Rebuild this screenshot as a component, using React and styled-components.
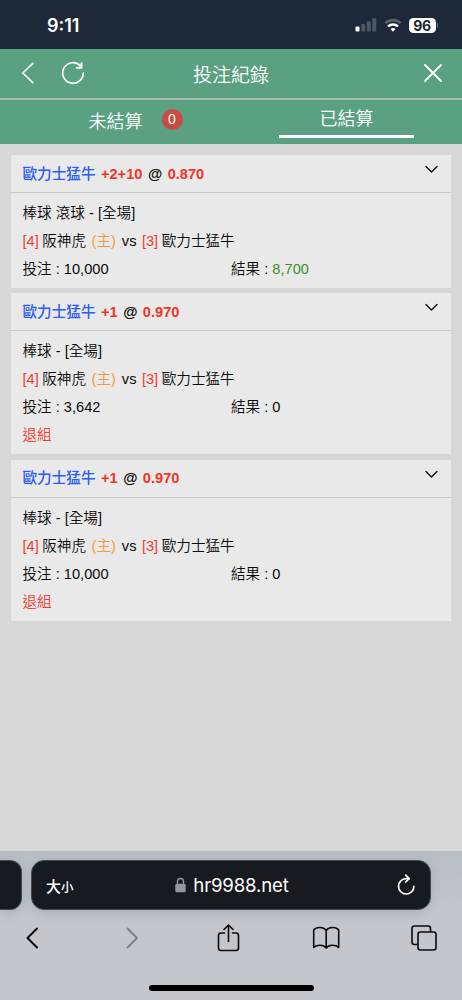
import React from 'react';
import styled, { createGlobalStyle } from 'styled-components';

const GlobalStyle = createGlobalStyle`
  * {
    box-sizing: border-box;
  }
  body {
    margin: 0;
    background: #d7d7d7;
    font-family: "Liberation Sans", "Noto Sans CJK TC", sans-serif;
  }
`;

const Screen = styled.div`
  width: 462px;
  height: 1000px;
  display: flex;
  flex-direction: column;
  overflow: hidden;
  color: #0b0b0b;
`;

const StatusBar = styled.div`
  height: 49px;
  flex-shrink: 0;
  padding: 1px 24px 0 47px;
  display: flex;
  align-items: center;
  background: #1d2939;
  color: #fff;
  font-family: Inter, sans-serif;
`;

const Time = styled.span`
  flex: 1;
  font-size: 18px;
  font-weight: 600;
`;

const StatusIcons = styled.div`
  display: flex;
  align-items: center;
  gap: 7px;
`;

const Battery = styled.span`
  width: 27px;
  height: 15px;
  border-radius: 4.5px;
  background: #fff;
  color: #1d2939;
  font-size: 14px;
  font-weight: 700;
  letter-spacing: -0.4px;
  line-height: 15px;
  text-align: center;
`;

const BatteryGroup = styled.div`
  display: flex;
  align-items: center;
  gap: 1px;
`;

const BatteryTip = styled.span`
  width: 1.5px;
  height: 5px;
  border-radius: 0 2px 2px 0;
  background: #707884;
`;

const NavBar = styled.header`
  height: 51px;
  flex-shrink: 0;
  padding: 0 19px 2px 21px;
  display: grid;
  grid-template-columns: 1fr auto 1fr;
  align-items: center;
  background: #5aa182;
  border-bottom: 2px solid #a9bcb3;
  color: #fff;
`;

const NavLeft = styled.div`
  display: flex;
  align-items: center;
  gap: 26px;
`;

const NavRight = styled.div`
  display: flex;
  justify-content: flex-end;
`;

const Title = styled.h1`
  margin: 6px 2px 0 0;
  font-size: 19px;
  font-weight: 350;
  line-height: 24px;
`;

const Tabs = styled.div`
  height: 44px;
  flex-shrink: 0;
  display: flex;
  background: #5aa182;
  color: #fff;
`;

const Tab = styled.div`
  flex: 1;
  display: flex;
  flex-direction: column;
  align-items: center;
  padding-top: ${props => (props.$active ? '6px' : '9px')};
  font-size: 18px;
  font-weight: 350;
  line-height: 26px;
`;

const TabLabel = styled.div`
  display: flex;
  align-items: flex-start;
  gap: 19px;
  margin-left: ${props => (props.$badge ? '40px' : '0')};
`;

const Underline = styled.div`
  width: 135px;
  height: 3px;
  margin-top: 3px;
  background: #fff;
`;

const Badge = styled.span`
  width: 21px;
  height: 21px;
  border-radius: 50%;
  background: #c84c43;
  font-size: 14px;
  line-height: 21px;
  text-align: center;
`;

const List = styled.main`
  flex: 1;
  padding: 11px 11px 0;
  display: flex;
  flex-direction: column;
  gap: 5.3px;
`;

const Card = styled.section`
  background: #e9e9e9;
  padding-bottom: 5px;
  font-size: 14.6px;
`;

const CardHead = styled.div`
  height: 38px;
  padding: 0 13px 0 11.5px;
  display: flex;
  justify-content: space-between;
  border-bottom: 1px solid #c9c9c9;
`;

const Pick = styled.div`
  display: flex;
  align-items: center;
  gap: 5.5px;
  font-weight: bold;
  line-height: 38px;
`;

const Team = styled.span`
  font-weight: 500;
  color: #2b5bf5;
`;

const Odds = styled.span`
  color: #f03428;
`;

const CardBody = styled.div`
  padding: 6px 11.5px 0;
`;

const Row = styled.div`
  height: 28px;
  display: flex;
  align-items: center;
  line-height: 28px;
  white-space: pre;
  font-weight: 350;
  color: ${props => (props.$red ? '#ee3b2f' : 'inherit')};
`;

const Rank = styled.span`
  color: #ee3b2f;
  margin-right: 3.5px;
`;

const Home = styled.span`
  color: #f29a3f;
  margin: 0 6px 0 5.5px;
`;

const Versus = styled.span`
  margin-right: 5.5px;
`;

const Half = styled.span`
  width: 208.5px;
`;

const Win = styled.span`
  color: #3b8f25;
`;

const Browser = styled.footer`
  height: 149px;
  flex-shrink: 0;
  display: flex;
  flex-direction: column;
  align-items: center;
  border-top: 1px solid #b9bcbf;
  background: linear-gradient(#b9bdc4, #c3c6cb 60px);
`;

const AddressRow = styled.div`
  align-self: stretch;
  margin-top: 8px;
  display: flex;
  gap: 9px;
`;

const PreviousTab = styled.div`
  width: 22px;
  height: 50px;
  border: 1px solid #444b50;
  border-left: 0;
  border-radius: 0 12px 12px 0;
  background: #171a1f;
  box-shadow: 0 3px 12px rgba(0, 0, 0, 0.12);
`;

const Address = styled.div`
  width: 400px;
  height: 50px;
  padding: 0 14px;
  display: grid;
  grid-template-columns: 1fr auto 1fr;
  align-items: center;
  border: 1px solid #444b50;
  border-radius: 13px;
  background: #171a1f;
  box-shadow: 0 3px 12px rgba(0, 0, 0, 0.12);
  color: #fff;
`;

const TextSize = styled.span`
  font-size: 15px;
  font-weight: 500;

  small {
    font-size: 12.5px;
  }
`;

const Url = styled.div`
  display: flex;
  align-items: center;
  gap: 7px;
  margin: 0 0 0 2px;
  font-family: Inter, sans-serif;
  font-size: 18.6px;
  letter-spacing: -0.15px;
`;

const Toolbar = styled.nav`
  align-self: stretch;
  height: 56px;
  padding: 0 24px 0 18px;
  display: flex;
  align-items: center;
  justify-content: space-between;
`;

const HomeIndicator = styled.div`
  width: 165px;
  height: 6px;
  margin-top: 19px;
  border-radius: 3px;
  background: #000;
`;

const Icon = ({ w, h, stroke = 'currentColor', sw = 1.7, children }) => (
  <svg width={w} height={h} viewBox={`0 0 ${w} ${h}`} fill="none" stroke={stroke} strokeWidth={sw} strokeLinecap="round" strokeLinejoin="round">
    {children}
  </svg>
);

const bets = [
  { line: '+2+10', odds: '0.870', type: '棒球 滾球 - [全場]', stake: '10,000', result: '8,700', win: true },
  { line: '+1', odds: '0.970', type: '棒球 - [全場]', stake: '3,642', result: '0', refund: true },
  { line: '+1', odds: '0.970', type: '棒球 - [全場]', stake: '10,000', result: '0', refund: true },
];

const BetCard = ({ bet }) => (
  <Card>
    <CardHead>
      <Pick>
        <Team>歐力士猛牛</Team>
        <Odds>{bet.line}</Odds>
        <span>@</span>
        <Odds>{bet.odds}</Odds>
      </Pick>
      <Icon w={13} h={30} sw={1.3}><path d="M1 11.5 6.5 17 12 11.5" /></Icon>
    </CardHead>
    <CardBody>
      <Row>{bet.type}</Row>
      <Row>
        <Rank>[4]</Rank>阪神虎<Home>(主)</Home><Versus>vs</Versus><Rank>[3]</Rank>歐力士猛牛
      </Row>
      <Row>
        <Half>投注 : {bet.stake}</Half>
        <span>結果 : {bet.win ? <Win>{bet.result}</Win> : bet.result}</span>
      </Row>
      {bet.refund && <Row $red>退組</Row>}
    </CardBody>
  </Card>
);

const App = () => (
  <Screen>
    <GlobalStyle />
    <StatusBar>
      <Time>9:11</Time>
      <StatusIcons>
        <svg width="22" height="14" viewBox="0 0 22 14" fill="#4d5763">
          <rect x="0.5" y="8.5" width="4" height="5" rx="1" fill="#fff" />
          <rect x="6.2" y="6" width="4" height="7.5" rx="1" />
          <rect x="11.8" y="3.2" width="4" height="10.3" rx="1" />
          <rect x="17.3" y="0.3" width="4" height="13.2" rx="1" />
        </svg>
        <svg width="18" height="14" viewBox="0 0 18 14" fill="none" strokeWidth="2.5">
          <path d="M1.3 5.2a11 11 0 0 1 15.4 0" stroke="#59626e" />
          <path d="M4 8.5a7 7 0 0 1 10 0" stroke="#fff" />
          <path d="M6.5 11.1a3.6 3.6 0 0 1 5 0L9 13.7z" fill="#fff" />
        </svg>
        <BatteryGroup>
          <Battery>96</Battery>
          <BatteryTip />
        </BatteryGroup>
      </StatusIcons>
    </StatusBar>
    <NavBar>
      <NavLeft>
        <Icon w={14} h={24}><path d="M11.8 2.3 1.8 12l10 9.7" /></Icon>
        <Icon w={24} h={24}>
          <path d="M22.3 12.2A10.3 10.3 0 1 1 19.4 4.8l1 1.200" />
          <path d="M20.5 2.2v4.600h-4.800" strokeWidth="2" />
        </Icon>
      </NavLeft>
      <Title>投注紀錄</Title>
      <NavRight>
        <Icon w={20} h={20} sw={1.9}><path d="m2 2 16 16M18 2 2 18" /></Icon>
      </NavRight>
    </NavBar>
    <Tabs>
      <Tab>
        <TabLabel $badge>
          未結算
          <Badge>0</Badge>
        </TabLabel>
      </Tab>
      <Tab $active>
        <TabLabel>已結算</TabLabel>
        <Underline />
      </Tab>
    </Tabs>
    <List>
      {bets.map((bet, i) => <BetCard key={i} bet={bet} />)}
    </List>
    <Browser>
      <AddressRow>
        <PreviousTab />
        <Address>
          <TextSize>大<small>小</small></TextSize>
          <Url>
            <svg width="11" height="16" viewBox="0 0 11 16" fill="none">
              <path d="M2.5 8V4.5a3 3 0 0 1 6 0V8" stroke="#96979c" strokeWidth="1.4" />
              <rect x="0.3" y="6.8" width="10.4" height="8.5" rx="1.5" fill="#96979c" />
            </svg>
            hr9988.net
          </Url>
          <NavRight>
            <Icon w={19} h={22} sw={1.7}>
              <path d="M12 4.6H9.2a7.700 7.700 0 1 0 7.700 7.700" />
              <path d="M8.7 1.2 12.2 4.6 8.7 8" />
            </Icon>
          </NavRight>
        </Address>
      </AddressRow>
      <Toolbar>
        <Icon w={28} h={24} sw={2}><path d="M19 2.5 9.5 12l9.5 9.5" /></Icon>
        <Icon w={28} h={24} sw={1.8} stroke="#7c7e82"><path d="m11.5 2.5 9.5 9.5-9.5 9.5" /></Icon>
        <Icon w={28} h={28} sw={1.6}>
          <path d="M10.5 9H7Q4.5 9 4.5 11.5v12.5q0 2.5 2.5 2.5h15q2.5 0 2.5-2.5V11.5q0-2.5-2.5-2.5H18.5" />
          <path d="M14.5 17.5V1.2M10 5.5 14.5 1 19 5.5" />
        </Icon>
        <Icon w={28} h={24} sw={1.6}>
          <path d="M14.2 4.5C12 .8 4.5.5 1.7 4v17.5c3-3 10-3 12.500.5 2.500-3.500 9.500-3.500 12.500-.5V4c-2.800-3.500-10.300-3.200-12.500.5V22" />
        </Icon>
        <Icon w={28} h={26} sw={1.6}>
          <rect x="8" y="7" width="18" height="18" rx="2.5" />
          <path d="M7.5 19.5H4.5Q2 19.5 2 17V3.5Q2 1 4.5 1h13.5Q20.5 1 20.5 3.5V6.5" />
        </Icon>
      </Toolbar>
      <HomeIndicator />
    </Browser>
  </Screen>
);

export default App;
